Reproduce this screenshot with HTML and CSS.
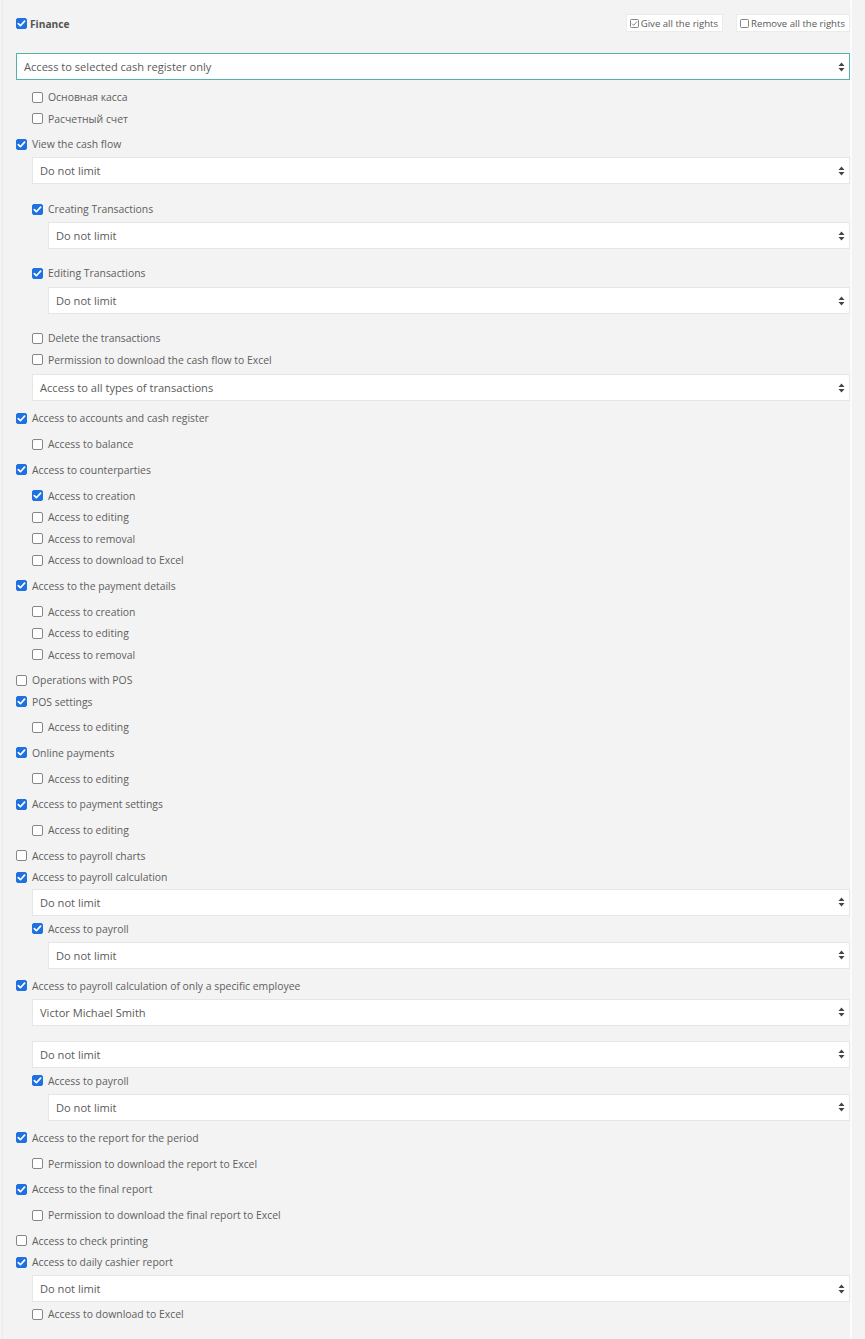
FILE: index.html
```html
<!DOCTYPE html>
<html>
<head>
<meta charset="utf-8">
<title>Finance rights</title>
<link rel="stylesheet" href="styles.css">
</head>
<body>
<div class="page">
  <div class="head">
    <div class="row title-row">
      <span class="cb on"><svg viewBox="0 0 11 11"><path d="M2.3 5.6 L4.4 7.7 L8.6 3.1"/></svg></span>
      <span class="title">Finance</span>
    </div>
    <div class="btns">
      <span class="btn"><svg class="mini" viewBox="0 0 9 9"><rect x="0.5" y="0.5" width="8" height="8" rx="1"/><path d="M2 4.6 L3.7 6.3 L7 2.6"/></svg>Give all the rights</span>
      <span class="btn"><svg class="mini" viewBox="0 0 9 9"><rect x="0.5" y="0.5" width="8" height="8" rx="1"/></svg>Remove all the rights</span>
    </div>
  </div>

  <div class="sel main"><span>Access to selected cash register only</span><svg class="arr" viewBox="0 0 7 10"><path d="M0.5 4 L3.5 0.5 L6.5 4 Z M0.5 6 L3.5 9.5 L6.5 6 Z"/></svg></div>
  <div class="grp">
    <div class="row"><span class="cb"></span>Основная касса</div>
    <div class="row"><span class="cb"></span>Расчетный счет</div>
  </div>

  <div class="row"><span class="cb on"><svg viewBox="0 0 11 11"><path d="M2.3 5.6 L4.4 7.7 L8.6 3.1"/></svg></span>View the cash flow</div>
  <div class="sub">
    <div class="sel sp-10"><span>Do not limit</span><svg class="arr" viewBox="0 0 7 10"><path d="M0.5 4 L3.5 0.5 L6.5 4 Z M0.5 6 L3.5 9.5 L6.5 6 Z"/></svg></div>
    <div class="grp flat">
      <div class="row"><span class="cb on"><svg viewBox="0 0 11 11"><path d="M2.3 5.6 L4.4 7.7 L8.6 3.1"/></svg></span>Creating Transactions</div>
      <div class="sub">
        <div class="sel sp-13"><span>Do not limit</span><svg class="arr" viewBox="0 0 7 10"><path d="M0.5 4 L3.5 0.5 L6.5 4 Z M0.5 6 L3.5 9.5 L6.5 6 Z"/></svg></div>
      </div>
      <div class="row"><span class="cb on"><svg viewBox="0 0 11 11"><path d="M2.3 5.6 L4.4 7.7 L8.6 3.1"/></svg></span>Editing Transactions</div>
      <div class="sub">
        <div class="sel sp-13 low"><span>Do not limit</span><svg class="arr" viewBox="0 0 7 10"><path d="M0.5 4 L3.5 0.5 L6.5 4 Z M0.5 6 L3.5 9.5 L6.5 6 Z"/></svg></div>
      </div>
      <div class="row"><span class="cb"></span>Delete the transactions</div>
      <div class="row"><span class="cb"></span>Permission to download the cash flow to Excel</div>
    </div>
    <div class="sel flush end"><span>Access to all types of transactions</span><svg class="arr" viewBox="0 0 7 10"><path d="M0.5 4 L3.5 0.5 L6.5 4 Z M0.5 6 L3.5 9.5 L6.5 6 Z"/></svg></div>
  </div>

  <div class="row"><span class="cb on"><svg viewBox="0 0 11 11"><path d="M2.3 5.6 L4.4 7.7 L8.6 3.1"/></svg></span>Access to accounts and cash register</div>
  <div class="grp">
    <div class="row"><span class="cb"></span>Access to balance</div>
  </div>

  <div class="row"><span class="cb on"><svg viewBox="0 0 11 11"><path d="M2.3 5.6 L4.4 7.7 L8.6 3.1"/></svg></span>Access to counterparties</div>
  <div class="grp">
    <div class="row"><span class="cb on"><svg viewBox="0 0 11 11"><path d="M2.3 5.6 L4.4 7.7 L8.6 3.1"/></svg></span>Access to creation</div>
    <div class="row"><span class="cb"></span>Access to editing</div>
    <div class="row"><span class="cb"></span>Access to removal</div>
    <div class="row"><span class="cb"></span>Access to download to Excel</div>
  </div>

  <div class="row"><span class="cb on"><svg viewBox="0 0 11 11"><path d="M2.3 5.6 L4.4 7.7 L8.6 3.1"/></svg></span>Access to the payment details</div>
  <div class="grp">
    <div class="row"><span class="cb"></span>Access to creation</div>
    <div class="row"><span class="cb"></span>Access to editing</div>
    <div class="row"><span class="cb"></span>Access to removal</div>
  </div>

  <div class="row"><span class="cb"></span>Operations with POS</div>
  <div class="row short"><span class="cb on"><svg viewBox="0 0 11 11"><path d="M2.3 5.6 L4.4 7.7 L8.6 3.1"/></svg></span>POS settings</div>
  <div class="grp">
    <div class="row"><span class="cb"></span>Access to editing</div>
  </div>

  <div class="row"><span class="cb on"><svg viewBox="0 0 11 11"><path d="M2.3 5.6 L4.4 7.7 L8.6 3.1"/></svg></span>Online payments</div>
  <div class="grp">
    <div class="row"><span class="cb"></span>Access to editing</div>
  </div>

  <div class="row"><span class="cb on"><svg viewBox="0 0 11 11"><path d="M2.3 5.6 L4.4 7.7 L8.6 3.1"/></svg></span>Access to payment settings</div>
  <div class="grp">
    <div class="row"><span class="cb"></span>Access to editing</div>
  </div>

  <div class="row"><span class="cb"></span>Access to payroll charts</div>
  <div class="row short"><span class="cb on"><svg viewBox="0 0 11 11"><path d="M2.3 5.6 L4.4 7.7 L8.6 3.1"/></svg></span>Access to payroll calculation</div>
  <div class="sub">
    <div class="sel tight"><span>Do not limit</span><svg class="arr" viewBox="0 0 7 10"><path d="M0.5 4 L3.5 0.5 L6.5 4 Z M0.5 6 L3.5 9.5 L6.5 6 Z"/></svg></div>
    <div class="row"><span class="cb on"><svg viewBox="0 0 11 11"><path d="M2.3 5.6 L4.4 7.7 L8.6 3.1"/></svg></span>Access to payroll</div>
    <div class="sub">
      <div class="sel end"><span>Do not limit</span><svg class="arr" viewBox="0 0 7 10"><path d="M0.5 4 L3.5 0.5 L6.5 4 Z M0.5 6 L3.5 9.5 L6.5 6 Z"/></svg></div>
    </div>
  </div>

  <div class="row"><span class="cb on"><svg viewBox="0 0 11 11"><path d="M2.3 5.6 L4.4 7.7 L8.6 3.1"/></svg></span>Access to payroll calculation of only a specific employee</div>
  <div class="sub">
    <div class="sel sp-15"><span>Victor Michael Smith</span><svg class="arr" viewBox="0 0 7 10"><path d="M0.5 4 L3.5 0.5 L6.5 4 Z M0.5 6 L3.5 9.5 L6.5 6 Z"/></svg></div>
    <div class="sel flush"><span>Do not limit</span><svg class="arr" viewBox="0 0 7 10"><path d="M0.5 4 L3.5 0.5 L6.5 4 Z M0.5 6 L3.5 9.5 L6.5 6 Z"/></svg></div>
    <div class="row"><span class="cb on"><svg viewBox="0 0 11 11"><path d="M2.3 5.6 L4.4 7.7 L8.6 3.1"/></svg></span>Access to payroll</div>
    <div class="sub">
      <div class="sel end"><span>Do not limit</span><svg class="arr" viewBox="0 0 7 10"><path d="M0.5 4 L3.5 0.5 L6.5 4 Z M0.5 6 L3.5 9.5 L6.5 6 Z"/></svg></div>
    </div>
  </div>

  <div class="row"><span class="cb on"><svg viewBox="0 0 11 11"><path d="M2.3 5.6 L4.4 7.7 L8.6 3.1"/></svg></span>Access to the report for the period</div>
  <div class="grp">
    <div class="row"><span class="cb"></span>Permission to download the report to Excel</div>
  </div>

  <div class="row"><span class="cb on"><svg viewBox="0 0 11 11"><path d="M2.3 5.6 L4.4 7.7 L8.6 3.1"/></svg></span>Access to the final report</div>
  <div class="grp">
    <div class="row"><span class="cb"></span>Permission to download the final report to Excel</div>
  </div>

  <div class="row"><span class="cb"></span>Access to check printing</div>
  <div class="row"><span class="cb on"><svg viewBox="0 0 11 11"><path d="M2.3 5.6 L4.4 7.7 L8.6 3.1"/></svg></span>Access to daily cashier report</div>
  <div class="sub">
    <div class="sel tight2"><span>Do not limit</span><svg class="arr" viewBox="0 0 7 10"><path d="M0.5 4 L3.5 0.5 L6.5 4 Z M0.5 6 L3.5 9.5 L6.5 6 Z"/></svg></div>
    <div class="row"><span class="cb"></span>Access to download to Excel</div>
  </div>
</div>
</body>
</html>
```

FILE: styles.css
```css
* { box-sizing: border-box; }
html, body { margin: 0; padding: 0; background: #f3f3f3; }
body {
  font-family: "Open Sans", "Noto Sans", "DejaVu Sans", sans-serif;
  font-size: 10.4px;
  color: #606060;
}
.page {
  margin-left: 2px;
  width: 850px;
  min-height: 1339px;
  border-left: 1px solid #ebebeb;
  border-right: 2px solid #fbfbfb;
  padding: 14px 0 20px 13px;
}
.head {
  display: flex;
  align-items: center;
  justify-content: space-between;
  height: 18px;
  margin-bottom: 21px;
}
.head .row { height: 18px; }
.head .cb { margin-right: 3px; }
.title { font-weight: 700; margin-top: 1px; color: #555; font-size: 10.2px; }
.btns { display: flex; gap: 13px; }
.btn {
  display: flex;
  align-items: center;
  gap: 2px;
  height: 18px;
  padding: 0 4px 0 3px;
  background: #fff;
  border: 1px solid #ebebeb;
  font-size: 9.6px;
  color: #5a5a5a;
}
.mini { width: 9px; height: 9px; flex: none; }
.mini rect, .mini path { fill: none; stroke: #777; stroke-width: 0.9; }

.row {
  display: flex;
  align-items: center;
  height: 21.5px;
  white-space: nowrap;
}
.row.short { height: 21px; }
.cb {
  width: 11px;
  height: 11px;
  border: 1px solid #868686;
  border-radius: 2px;
  background: #fff;
  margin-right: 5px;
  flex: none;
  display: flex;
}
.cb.on { background: #1f70e0; border-color: #1f70e0; }
.cb svg { width: 11px; height: 11px; margin: -1px; }
.cb svg path { fill: none; stroke: #fff; stroke-width: 1.7; stroke-linecap: round; stroke-linejoin: round; }

.grp { margin-left: 16px; padding: 4.5px 0 4px; }
.grp.flat { margin-left: 0; }
.sub { margin-left: 16px; }

.sel {
  display: flex;
  align-items: center;
  justify-content: space-between;
  height: 27px;
  background: #fff;
  border: 1px solid #e6e6e6;
  padding: 0 4px 0 7px;
  font-size: 11.1px;
  color: #5a5a5a;
  margin: 2.25px 0 2px;
}
.sel.main { border-color: #52b3a6; margin: 0 0 1.75px; }
.sel.sp-10 { margin-bottom: 9.75px; }
.sel.sp-13 { margin-bottom: 13.25px; }
.sel.sp-15 { margin-bottom: 15px; }
.sel.low { margin-top: 3.25px; }
.sel.flush { margin-top: 0; }
.sel.end { margin-bottom: 6.25px; }
.sel.tight { margin-top: 1px; margin-bottom: 2.5px; }
.sel.tight2 { margin-bottom: 1.25px; }
.arr { width: 7px; height: 10px; flex: none; }
.arr path { fill: #444; }
```
